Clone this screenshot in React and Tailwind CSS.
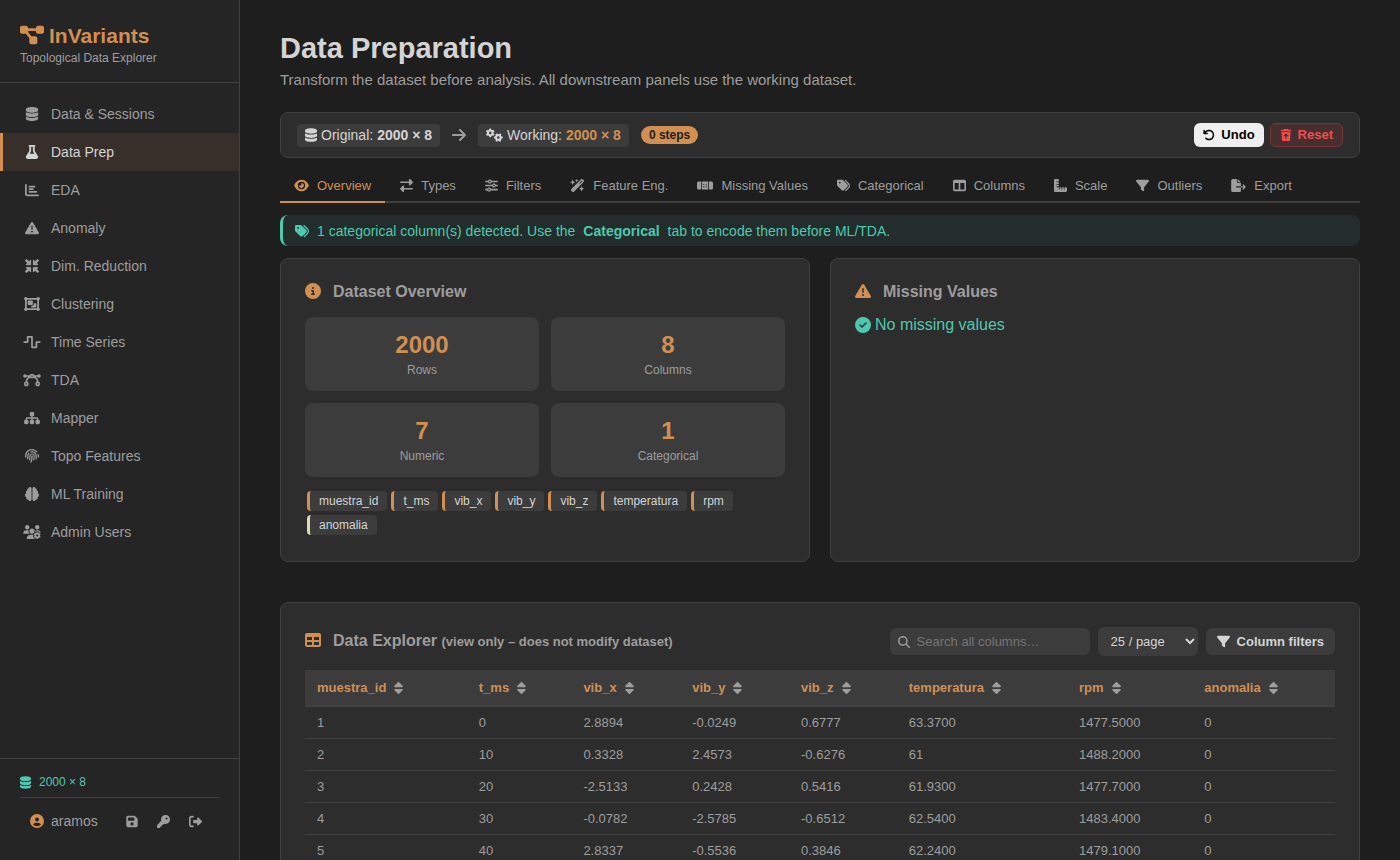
import React, { useState } from 'react';
import {
  FaDiagramProject, FaDatabase, FaFlask, FaChartBar, FaTriangleExclamation, FaMinimize,
  FaObjectGroup, FaWaveSquare, FaBezierCurve, FaSitemap, FaFingerprint, FaBrain, FaUsersGear,
  FaCircleUser, FaFloppyDisk, FaKey, FaRightFromBracket, FaArrowRight, FaGears,
  FaArrowRotateLeft, FaTrashArrowUp, FaEye, FaRightLeft, FaSliders, FaWandMagicSparkles,
  FaBandage, FaTags, FaTableColumns, FaRulerCombined, FaFilter, FaFileExport, FaCircleInfo,
  FaCircleCheck, FaTable, FaMagnifyingGlass, FaSort,
} from 'react-icons/fa6';

const NAV = [
  { label: 'Data & Sessions', Icon: FaDatabase },
  { label: 'Data Prep', Icon: FaFlask },
  { label: 'EDA', Icon: FaChartBar },
  { label: 'Anomaly', Icon: FaTriangleExclamation },
  { label: 'Dim. Reduction', Icon: FaMinimize },
  { label: 'Clustering', Icon: FaObjectGroup },
  { label: 'Time Series', Icon: FaWaveSquare },
  { label: 'TDA', Icon: FaBezierCurve },
  { label: 'Mapper', Icon: FaSitemap },
  { label: 'Topo Features', Icon: FaFingerprint },
  { label: 'ML Training', Icon: FaBrain },
  { label: 'Admin Users', Icon: FaUsersGear },
];

// glyphs differ in aspect ratio, so each tab carries its own icon width
const TABS = [
  { label: 'Overview', Icon: FaEye, size: 'w-[15px]' },
  { label: 'Types', Icon: FaRightLeft, size: 'w-[13px]' },
  { label: 'Filters', Icon: FaSliders, size: 'w-[13px]' },
  { label: 'Feature Eng.', Icon: FaWandMagicSparkles, size: 'w-[15px]' },
  { label: 'Missing Values', Icon: FaBandage, size: 'w-[16px]' },
  { label: 'Categorical', Icon: FaTags, size: 'w-[13px]' },
  { label: 'Columns', Icon: FaTableColumns, size: 'w-[13px]' },
  { label: 'Scale', Icon: FaRulerCombined, size: 'w-[13px]' },
  { label: 'Outliers', Icon: FaFilter, size: 'w-[13px]' },
  { label: 'Export', Icon: FaFileExport, size: 'w-[15px]' },
];

const STATS = [
  { label: 'Rows', value: 2000 },
  { label: 'Columns', value: 8 },
  { label: 'Numeric', value: 7 },
  { label: 'Categorical', value: 1 },
];

const COLUMNS = ['muestra_id', 't_ms', 'vib_x', 'vib_y', 'vib_z', 'temperatura', 'rpm', 'anomalia'];

const ROWS = [
  ['1', '0', '2.8894', '-0.0249', '0.6777', '63.3700', '1477.5000', '0'],
  ['2', '10', '0.3328', '2.4573', '-0.6276', '61', '1488.2000', '0'],
  ['3', '20', '-2.5133', '0.2428', '0.5416', '61.9300', '1477.7000', '0'],
  ['4', '30', '-0.0782', '-2.5785', '-0.6512', '62.5400', '1483.4000', '0'],
  ['5', '40', '2.8337', '-0.5536', '0.3846', '62.2400', '1479.1000', '0'],
];

function Sidebar() {
  return (
    <aside className="w-60 shrink-0 flex flex-col bg-[#252526] border-r border-[#404040]">
      <div className="px-5 pt-6 pb-[14px] border-b border-[#404040]">
        <div className="flex items-start gap-[5px] text-[21px] leading-6 font-bold text-[#d18f52]">
          <FaDiagramProject className="w-6 h-[22px]" />
          <span>InVariants</span>
        </div>
        <p className="text-xs leading-5 text-[#9d9d9d]">Topological Data Explorer</p>
      </div>

      <nav className="flex-1 py-3">
        {NAV.map(({ label, Icon }) => (
          <a
            key={label}
            href="#"
            className={`flex items-center gap-[10px] h-[38px] pl-5 border-l-[3px] text-sm ${
              label === 'Data Prep'
                ? 'border-[#d18f52] bg-[#382f2a] text-[#d4d4d4]'
                : 'border-transparent text-[#9d9d9d]'
            }`}
          >
            <Icon className="w-[18px] h-[14px]" />
            {label}
          </a>
        ))}
      </nav>

      <div className="px-5 pt-[14px] pb-[27px] border-t border-[#404040]">
        <div className="flex items-center gap-2 pb-[6px] text-xs leading-[18px] text-[#4ec9b0]">
          <FaDatabase className="w-[11px] h-[13px]" />
          <span>2000 × 8</span>
        </div>
        <div className="flex items-center pt-[11px] pl-[10px] pr-[17px] border-t border-[#404040] text-sm leading-6 text-[#9d9d9d]">
          <FaCircleUser className="w-[14px] h-[14px] text-[#d18f52]" />
          <span className="ml-[7px]">aramos</span>
          <div className="ml-auto flex items-center gap-[19px]">
            <button type="button" aria-label="Save"><FaFloppyDisk className="w-3 h-[13px]" /></button>
            <button type="button" aria-label="Change password"><FaKey className="w-[13px] h-[13px]" /></button>
            <button type="button" aria-label="Log out"><FaRightFromBracket className="w-[13px] h-[13px]" /></button>
          </div>
        </div>
      </div>
    </aside>
  );
}

function StatusBar() {
  return (
    <div className="flex items-center gap-3 h-[46px] px-4 bg-[#2d2d2d] border border-[#404040] rounded-lg text-sm text-[#d4d4d4]">
      <span className="flex items-center gap-1 h-[23px] px-2 rounded bg-[#3c3c3c]">
        <FaDatabase className="w-3 h-[14px]" />
        Original: <strong>2000 × 8</strong>
      </span>
      <FaArrowRight className="w-[14px] h-4 text-[#9d9d9d]" />
      <span className="flex items-center gap-1 h-[23px] px-2 rounded bg-[#3c3c3c]">
        <FaGears className="w-[17px] h-[14px]" />
        Working: <strong className="text-[#d18f52]">2000 × 8</strong>
      </span>
      <span className="h-[18px] px-2 rounded-full bg-[#d18f52] text-xs leading-[18px] font-bold text-[#1e1e1e]">0 steps</span>
      <div className="ml-auto flex gap-[6px] text-[13px] font-bold">
        <button type="button" className="flex items-center gap-[6px] h-6 px-[9px] rounded-md bg-[#efefef] text-black">
          <FaArrowRotateLeft className="w-3 h-3" />Undo
        </button>
        <button type="button" className="flex items-center gap-[6px] h-6 px-[9px] rounded-md bg-[#452f2f] border border-[#7a3636] text-[#f14c4c]">
          <FaTrashArrowUp className="w-3 h-3" />Reset
        </button>
      </div>
    </div>
  );
}

function Card({ className = '', children }) {
  return (
    <section className={`p-6 bg-[#2d2d2d] border border-[#404040] rounded-lg ${className}`}>{children}</section>
  );
}

function CardTitle({ Icon, children }) {
  return (
    <h2 className="flex items-start gap-3 text-base leading-[18px] font-bold text-[#9d9d9d]">
      <Icon className="w-4 h-4 text-[#d18f52]" />
      <span>{children}</span>
    </h2>
  );
}

function DataExplorer() {
  const [search, setSearch] = useState('');
  const rows = ROWS.filter(r => r.some(v => v.includes(search)));

  return (
    <Card className="mt-10">
      <div className="flex items-center justify-between mb-[14px]">
        <CardTitle Icon={FaTable}>
          Data Explorer <span className="text-[13px]">(view only – does not modify dataset)</span>
        </CardTitle>
        <div className="flex items-center gap-2 text-[13px] text-[#d4d4d4]">
          <label className="flex items-center gap-[7px] w-[200px] h-[27px] px-2 rounded-md bg-[#3c3c3c]">
            <FaMagnifyingGlass className="w-3 h-3 shrink-0 text-[#9d9d9d]" />
            <input
              type="text"
              aria-label="Search all columns"
              placeholder="Search all columns…"
              value={search}
              onChange={e => setSearch(e.target.value)}
              className="w-full min-w-0 bg-transparent outline-none placeholder:text-[#757575]"
            />
          </label>
          <select aria-label="Rows per page" defaultValue="25" className="w-[100px] h-[29px] pl-[9px] rounded-md bg-[#3c3c3c]">
            <option value="25">25 / page</option>
            <option value="50">50 / page</option>
            <option value="100">100 / page</option>
          </select>
          <button type="button" className="flex items-center gap-[7px] h-[27px] px-[11px] rounded-md bg-[#3c3c3c] font-bold">
            <FaFilter className="w-[13px] h-[13px]" />Column filters
          </button>
        </div>
      </div>

      <table className="w-full text-[13px] text-left text-[#9d9d9d]">
        <thead>
          <tr className="bg-[#3c3c3c] border-b-2 border-[#404040] text-[#d18f52]">
            {COLUMNS.map(c => (
              <th key={c} className="h-9 px-3 py-0 font-bold">
                <span className="flex items-center gap-2">{c}<FaSort className="w-[9px] h-[14px] text-[#9d9d9d]" /></span>
              </th>
            ))}
          </tr>
        </thead>
        <tbody>
          {rows.map(r => (
            <tr key={r[0]} className="border-b border-[#404040]">
              {r.map((v, i) => <td key={COLUMNS[i]} className="h-8 px-3 pt-px pb-0">{v}</td>)}
            </tr>
          ))}
        </tbody>
      </table>
    </Card>
  );
}

export default function App() {
  const [tab, setTab] = useState('Overview');

  return (
    <div className="h-screen flex overflow-hidden bg-[#1e1e1e] text-[#d4d4d4] font-['Liberation_Sans',Arial,sans-serif]">
      <Sidebar />
      <main className="flex-1 min-w-0 overflow-y-auto [scrollbar-width:none] px-10 pt-8 pb-10">
        <h1 className="text-[29px] leading-8 font-bold">Data Preparation</h1>
        <p className="mt-1 mb-5 text-[15px] leading-6 text-[#9d9d9d]">
          Transform the dataset before analysis. All downstream panels use the working dataset.
        </p>

        <StatusBar />

        {/* Tabs */}
        <div role="tablist" className="flex gap-px mt-3 border-b-2 border-[#404040] text-[13px]">
          {TABS.map(({ label, Icon, size }) => (
            <button
              key={label}
              type="button"
              role="tab"
              aria-selected={tab === label}
              onClick={() => setTab(label)}
              className={`flex items-center gap-2 h-[33px] -mb-[2px] px-[14px] border-b-2 ${
                tab === label ? 'border-[#d18f52] text-[#d18f52]' : 'border-transparent text-[#9d9d9d]'
              }`}
            >
              <Icon className={`h-[13px] ${size}`} />{label}
            </button>
          ))}
        </div>

        <div className="flex items-center gap-2 h-[31px] mt-3 mb-3 px-3 border-l-[3px] border-[#4ec9b0] rounded-lg bg-[#232d2b] text-sm text-[#4ec9b0]">
          <FaTags className="w-[14px] h-[14px]" />
          <span>1 categorical column(s) detected. Use the</span>
          <strong>Categorical</strong>
          <span>tab to encode them before ML/TDA.</span>
        </div>

        <div className="grid grid-cols-2 gap-5">
          <Card>
            <CardTitle Icon={FaCircleInfo}>Dataset Overview</CardTitle>
            <div className="grid grid-cols-2 gap-3 mt-4 mb-3">
              {STATS.map(s => (
                <div key={s.label} className="h-[74px] pt-3 rounded-lg bg-[#3c3c3c] text-center">
                  <p className="text-2xl leading-8 font-bold text-[#d18f52]">{s.value}</p>
                  <p className="text-xs leading-[18px] text-[#9d9d9d]">{s.label}</p>
                </div>
              ))}
            </div>
            <div className="flex flex-wrap gap-1 p-[2px]">
              {COLUMNS.map(c => (
                <span
                  key={c}
                  className={`px-[9px] border-l-[3px] rounded bg-[#3c3c3c] text-xs leading-5 ${
                    c === 'anomalia' ? 'border-[#dcdcaa]' : 'border-[#d18f52]'
                  }`}
                >
                  {c}
                </span>
              ))}
            </div>
          </Card>

          <Card>
            <CardTitle Icon={FaTriangleExclamation}>Missing Values</CardTitle>
            <p className="flex items-center gap-1 mt-3 text-base text-[#4ec9b0]">
              <FaCircleCheck className="w-4 h-4" />No missing values
            </p>
          </Card>
        </div>

        <DataExplorer />
      </main>
    </div>
  );
}
